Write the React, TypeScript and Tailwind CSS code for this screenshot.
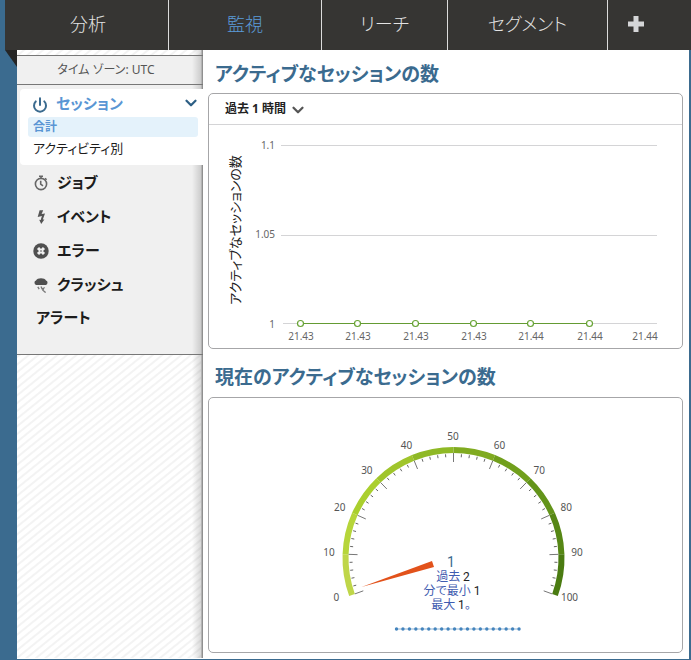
import React from "react";
import { ChevronDown, Power } from "lucide-react";

const tabs = [
  { label: "分析", width: "w-[164px] pl-[3px]" },
  { label: "監視", width: "w-[153px]", active: true },
  { label: "リーチ", width: "w-[126px]" },
  { label: "セグメント", width: "w-[160px]" },
];

function TimerIcon() {
  return (
    <svg className="size-4" viewBox="0 0 16 16" fill="none" stroke="#666" strokeWidth="1.6" aria-hidden="true">
      <circle cx="8" cy="9" r="5.6" />
      <path d="M6 1.2h4M8 1.2v2.2M12 3.2l1.6 1.6M7.7 5.8v3.4l2.3 1.7" />
    </svg>
  );
}

function BoltIcon() {
  return (
    <svg className="size-4" viewBox="0 0 16 16" fill="#555" aria-hidden="true">
      <path d="M6.6 1.2h3.6L8.6 5l3.4-.6-2.2 6.2 1.6-.2-3.2 4.6-2-4.3 1.5.3 1.2-4.1-4.2 1z" />
    </svg>
  );
}

function ErrorIcon() {
  return (
    <svg className="size-4" viewBox="0 0 16 16" aria-hidden="true">
      <circle cx="8" cy="8" r="7.7" fill="#505050" />
      <path d="M5 5l6 6M11 5l-6 6" stroke="#f1f1f1" strokeWidth="3" />
      <circle cx="8" cy="8" r="1.1" fill="#999" />
    </svg>
  );
}

function StormIcon() {
  return (
    <svg className="size-4" viewBox="0 0 16 16" fill="#505050" aria-hidden="true">
      <path d="M3.2 8a2.3 2.3 0 0 1-.2-4.4C3.8 1.9 5.6 1.2 8 1.2s4.3.8 5 2.4A2.3 2.3 0 0 1 12.8 8z" />
      <path d="M4.8 9.8l1.4 2.4M8 9.4l1 2.4 1.8-.6-1 2 2.8 2.400" fill="none" stroke="#777" strokeWidth="1.300" />
    </svg>
  );
}

const sections = [
  { label: "ジョブ", icon: <TimerIcon /> },
  { label: "イベント", icon: <BoltIcon /> },
  { label: "エラー", icon: <ErrorIcon /> },
  { label: "クラッシュ", icon: <StormIcon /> },
];

function Header() {
  return (
    <header className="ml-[5px] flex h-[50px] bg-[#363533] text-lg font-light text-[#e4e4e4]">
      <nav className="flex">
        {tabs.map((t) => (
          <a
            key={t.label}
            href="#"
            className={`flex items-center justify-center border-r border-[#dcdcdc] pb-[2px] ${t.width} ${t.active ? "text-[#5b9bd9]" : ""}`}
          >
            {t.label}
          </a>
        ))}
      </nav>
      <button type="button" aria-label="追加" className="flex w-14 items-center justify-center pb-[3px]">
        <svg className="size-[18px]" viewBox="0 0 18 18" aria-hidden="true">
          <path d="M6.5 1h5v5.5H17v5h-5.5V17h-5v-5.5H1v-5h5.5z" fill="#d5d6d8" />
        </svg>
      </button>
    </header>
  );
}

function Sidebar() {
  return (
    <aside className="mb-px flex w-[186px] shrink-0 flex-col bg-[linear-gradient(to_left,#909090_0_1px,#b4b4b4_1px_2px,#00000026_2px,#00000000_11px),repeating-linear-gradient(141deg,#fff_0_3px,#f3f3f3_4px_5px,#fff_6px)] pt-[5px]">
      <div className="border-b border-[#777] bg-[linear-gradient(to_left,#909090_0_1px,#b4b4b4_1px_2px,#00000026_2px,#00000000_11px)] bg-[#f0f0f0]">
        <p className="flex h-[30px] items-center justify-center border-y border-[#777] pr-2 text-xs text-[#555]">
          タイム ゾーン: UTC
        </p>
        <nav className="pt-1 pb-[21px] text-[15px] font-bold text-[#1c1c1c]">
          <div className="ml-[3px] h-[76px] rounded-l bg-white">
            <a href="#" className="flex h-7 items-center pr-[3px] pl-3 text-[#5a96d4]">
              <Power className="mt-1 mr-2 size-4 text-[#3b6b8f]" strokeWidth={3} />
              セッション
              <ChevronDown className="ml-auto size-[18px] text-[#2d5f85]" strokeWidth={3} />
            </a>
            <a href="#" className="mr-[5px] ml-2 flex h-5 items-center rounded-[3px] bg-[#e4f2fb] pl-[5px] text-xs text-[#5a96d4]">
              合計
            </a>
            <a href="#" className="flex h-6 items-center pl-[13px] text-[13px] font-normal">
              アクティビティ別
            </a>
          </div>
          {sections.map((s) => (
            <a key={s.label} href="#" className="flex h-[34px] items-center pl-4">
              <span className="mt-[2px] mr-2">{s.icon}</span>
              {s.label}
            </a>
          ))}
          <a href="#" className="flex h-8 items-center pl-[19px]">
            アラート
          </a>
        </nav>
      </div>
    </aside>
  );
}

const points = [
  { x: 91, label: "21.43" },
  { x: 148, label: "21.43" },
  { x: 206, label: "21.43" },
  { x: 264, label: "21.43" },
  { x: 321, label: "21.44" },
  { x: 380, label: "21.44" },
];

function SessionChart() {
  return (
    <svg className="block h-auto w-full" viewBox="0 0 473 223" fontSize="10" fill="#666" role="img" aria-label="アクティブなセッションの数">
      <path d="M72 20.5H448M72 110.5H448M74 198.5H448" stroke="#d4d4d6" />
      <text x="66" y="24" textAnchor="end">1.1</text>
      <text x="66" y="113" textAnchor="end">1.05</text>
      <text x="66" y="203" textAnchor="end">1</text>
      <text transform="translate(31 105) rotate(-90)" textAnchor="middle" fontSize="13" fill="#222">
        アクティブなセッションの数
      </text>
      <path d="M91 198.5H380" stroke="#649b33" />
      {points.map((p) => (
        <g key={p.x}>
          <circle cx={p.x + 0.5} cy="198.5" r="3" fill="#fff" stroke="#69a436" strokeWidth="1.2" />
          <text x={p.x + 1} y="215" textAnchor="middle">{p.label}</text>
        </g>
      ))}
      <text x="436" y="215" textAnchor="middle">21.44</text>
    </svg>
  );
}

const arcColors = ["#bfd649", "#b6d53a", "#aacf2e", "#a0c52c", "#8fb926", "#80ab20", "#719f1c", "#63941a", "#568715", "#4a7b11"];
const CX = 244.5;
const CY = 160;

function polar(value: number, rx: number, ry = rx) {
  const a = ((200 - value * 2.2) * Math.PI) / 180;
  return { x: CX + rx * Math.cos(a), y: CY - ry * Math.sin(a) };
}

function Gauge() {
  const ticks = Array.from({ length: 51 }, (_, i) => i * 2);
  return (
    <svg className="block h-auto w-full" viewBox="0 0 473 254" role="img" aria-label="現在のアクティブなセッションの数">
      {arcColors.map((color, i) => {
        const a = polar(i * 10, 108);
        const b = polar(i * 10 + 10, 108);
        return <path key={color} d={`M${a.x} ${a.y}A108 108 0 0 1 ${b.x} ${b.y}`} fill="none" stroke={color} strokeWidth="6" />;
      })}
      {ticks.map((v) => {
        const major = v % 10 === 0;
        const a = polar(v, major ? 105 : 104);
        const b = polar(v, major ? 96 : 101);
        return <line key={v} x1={a.x} y1={a.y} x2={b.x} y2={b.y} stroke={major ? "#777" : "#666"} />;
      })}
      {ticks.filter((v) => v % 10 === 0).map((v) => {
        const p = polar(v, 124, 120);
        return (
          <text key={v} x={p.x - 0.5} y={p.y + 2} textAnchor="middle" fontSize="10" fill="#555">{v}</text>
        );
      })}
      <path d="M152.5 189L223 163L225 169Z" fill="#e2521b" />
      <g textAnchor="middle" fontSize="12" fill="#3f5cb0" className="font-['Roboto','Noto_Sans_CJK_JP',sans-serif]">
        <text x="242" y="169" fontSize="14" fill="#3b6b8f">1</text>
        <text x="244" y="183">過去 <tspan fill="#222">2</tspan></text>
        <text x="243" y="197">分で最小 <tspan fill="#222">1</tspan></text>
        <text x="242" y="211">最大 <tspan fill="#222">1</tspan>。</text>
      </g>
      <path d="M187 231H310" stroke="#8fb4d4" />
      {Array.from({ length: 20 }, (_, i) => (
        <circle key={i} cx={187.5 + i * 6.45} cy="231" r="1.7" fill="#4484bd" />
      ))}
    </svg>
  );
}

export default function App() {
  return (
    <div className="bg-[#3b6b8f] font-['Noto_Sans','Noto_Sans_CJK_JP',sans-serif] [font-feature-settings:'palt']">
      <Header />
      <div className="flex">
        <div className="flex w-[17px] shrink-0 justify-end">
          <svg className="h-[17px] w-3" viewBox="0 0 12 17" aria-hidden="true">
            <path d="M0 0h12v17z" fill="#252525" />
          </svg>
        </div>
        <div className="mr-[2px] mb-px flex flex-1 bg-white">
          <Sidebar />
          <main className="min-w-0 flex-1 pr-[6px] pb-[6px] pl-[5px] text-[#222]">
            <h2 className="flex h-[43px] items-center pt-[6px] pl-[7px] text-[19px] font-bold text-[#3b6b8f]">
              アクティブなセッションの数
            </h2>
            <section className="rounded-[5px] border border-[#a6a6a8]">
              <div className="flex h-[31px] items-center border-b border-[#d4d4d6] pl-4">
                <select aria-label="期間" className="cursor-pointer appearance-none text-xs font-bold">
                  <option>過去 1 時間</option>
                </select>
                <ChevronDown className="mt-[2px] ml-[2px] size-[18px] text-[#555]" strokeWidth={3} />
              </div>
              <SessionChart />
            </section>
            <h2 className="flex h-12 items-center pt-2 pl-[7px] text-[19px] font-bold text-[#3b6b8f]">
              現在のアクティブなセッションの数
            </h2>
            <section className="rounded-[5px] border border-[#a6a6a8]">
              <Gauge />
            </section>
          </main>
        </div>
      </div>
    </div>
  );
}
